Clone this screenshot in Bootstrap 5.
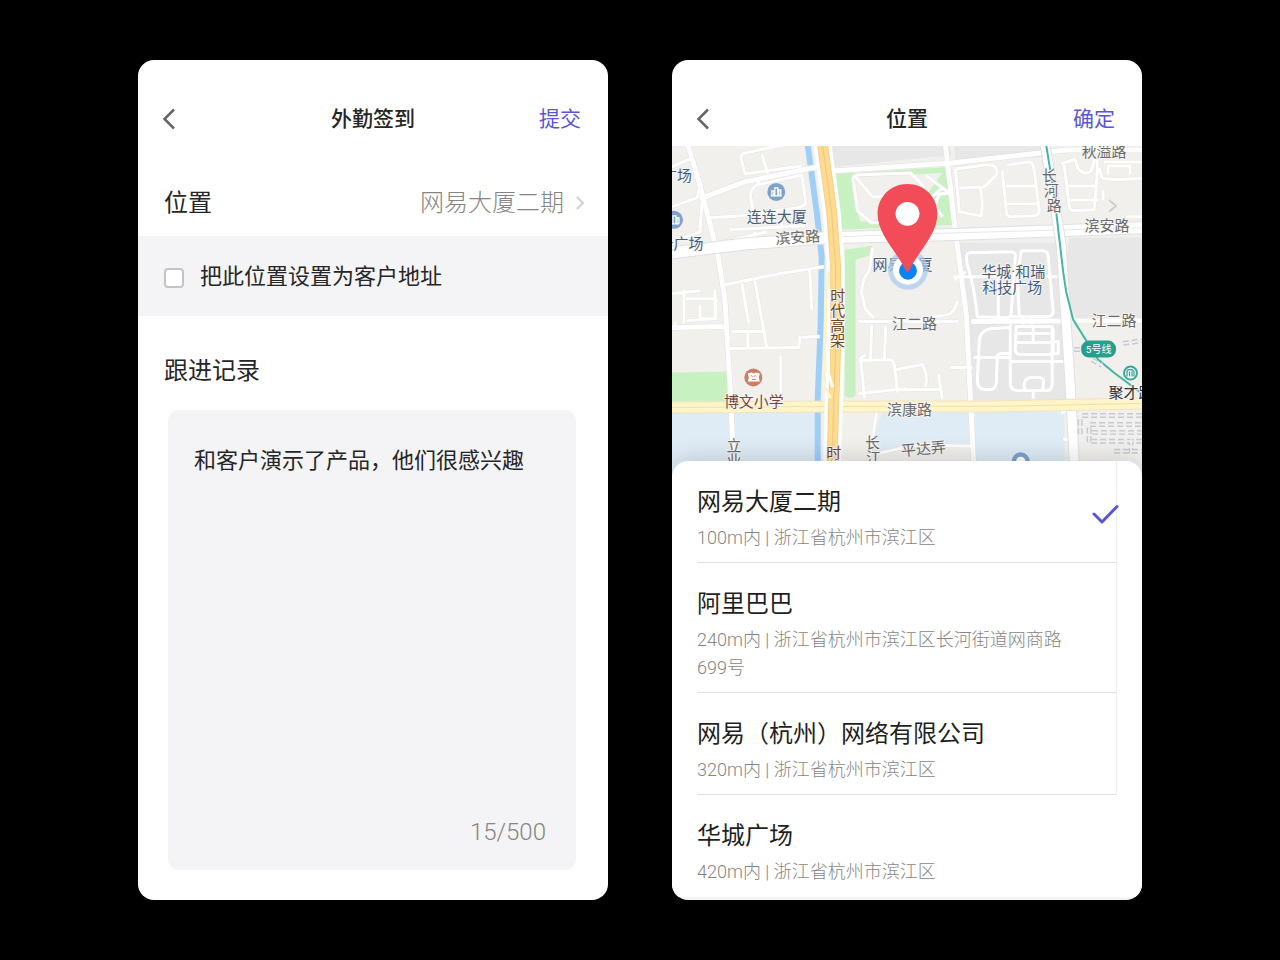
<!DOCTYPE html>
<html lang="zh-CN">
<head>
<meta charset="utf-8">
<meta name="viewport" content="width=device-width, initial-scale=1">
<title>外勤签到</title>
<link href="https://cdn.jsdelivr.net/npm/bootstrap@5.3.0/dist/css/bootstrap.min.css" rel="stylesheet">
<style>
  body { background: #000; color: #262626; font-family: Roboto, "Noto Sans CJK SC", sans-serif; }
  .stage { max-width: 1004px; padding: 60px 0; gap: 64px; }
  .screen { flex: 1 1 0; min-width: 320px; min-height: 840px; background: #fff; border-radius: 16px; overflow: hidden; }
  .topbar { height: 86px; padding: 32px 24px 0; display: grid; grid-template-columns: 1fr auto 1fr; align-items: center; }
  .topbar h1 { font-size: 21px; line-height: 30px; font-weight: 500; margin: 0; }
  .plain { background: none; border: 0; padding: 0; color: inherit; text-align: left; }
  .action { color: #5a55d6; font-size: 21px; line-height: 30px; margin-right: 3px; }
  .place { height: 90px; padding: 24px 20px 0 26px; font-size: 24px; line-height: 34px; }
  .quiet { color: #858585; font-weight: 300; }
  .band { background: #f4f4f7; height: 80px; padding: 0 26px; font-size: 22px; }
  .band .form-check-input { width: 20px; height: 20px; margin: 3px 0 0; border: 2px solid #c4c4c6; border-radius: 4px; background-color: #fff; }
  .note-title { height: 94px; padding: 16px 26px 0; font-size: 24px; }
  .note { background: #f4f4f7; border-radius: 10px; margin: 0 32px 30px 30px; padding: 33px 30px 20px 26px; }
  .note textarea { border: 0; background: none; padding: 0; resize: none; outline: 0; color: #262626; font-size: 22px; line-height: 36px; min-height: 300px; }
  .note output { font-size: 24px; line-height: 36px; }
  .map-view { display: block; width: 100%; height: auto; }
  .map-view text { font-family: Roboto, "Noto Sans CJK SC", sans-serif; font-size: 15px; text-anchor: middle; paint-order: stroke; stroke: #f6f5f3; stroke-width: 2px; stroke-linejoin: round; }
  .sheet { position: relative; margin-top: -16px; border-radius: 16px 16px 0 0; background: #fff; padding: 0 25px; box-shadow: 0 -4px 22px rgba(0,0,0,.14); }
  .spot { border-bottom: 1px solid #e0e0e0; border-right: 1px solid #ededed; }
  .spot:last-child { border-color: transparent; }
  .spot button { padding: 23px 0 10px; }
  .spot-name { font-size: 24px; line-height: 36px; color: #1f1f1f; }
  .spot-addr { font-size: 18px; line-height: 28px; margin-top: 4px; padding-right: 48px; }
  .tick { margin: 19px -3px 0 0; }
</style>
</head>
<body>
<main class="stage d-flex flex-wrap mx-auto">

  <section class="screen d-flex flex-column">
    <header class="topbar">
      <button type="button" class="plain d-flex" aria-label="返回">
        <svg width="14" height="22" viewBox="0 0 14 22" fill="none" stroke="#666" stroke-width="2.5"><path d="M12 1.5 2.5 11 12 20.5"/></svg>
      </button>
      <h1>外勤签到</h1>
      <button type="button" class="plain action ms-auto">提交</button>
    </header>
    <a href="#spots" class="place d-flex align-items-center justify-content-between text-reset text-decoration-none">
      <span>位置</span>
      <span class="quiet d-flex align-items-center">网易大厦二期
        <svg class="ms-2" width="16" height="16" viewBox="0 0 16 16" fill="none" stroke="#d0d0d0" stroke-width="2"><path d="m5 2 6 6-6 6"/></svg>
      </span>
    </a>
    <div class="band d-flex align-items-center">
      <input class="form-check-input" type="checkbox" id="asAddress">
      <label class="ps-3" for="asAddress">把此位置设置为客户地址</label>
    </div>
    <label class="note-title d-flex align-items-center" for="record">跟进记录</label>
    <div class="note flex-grow-1 d-flex flex-column">
      <textarea id="record" class="w-100 flex-grow-1" maxlength="500" spellcheck="false">和客户演示了产品，他们很感兴趣</textarea>
      <output class="quiet text-end" for="record">15/500</output>
    </div>
  </section>

  <section class="screen">
    <header class="topbar">
      <button type="button" class="plain d-flex" aria-label="返回">
        <svg width="14" height="22" viewBox="0 0 14 22" fill="none" stroke="#666" stroke-width="2.5"><path d="M12 1.5 2.5 11 12 20.5"/></svg>
      </button>
      <h1>位置</h1>
      <button type="button" class="plain action ms-auto">确定</button>
    </header>

    <svg class="map-view" viewBox="0 6 471 332" role="img" aria-label="地图">
      <rect y="6" width="471" height="332" fill="#f1f0ed"/>
      <!-- grey blocks -->
      <g fill="#e7e7e8">
        <path d="M160 5h118l2 10-118 12zM283 5h90l1 12-90 4zM288 103h98l10 158H300z"/>
        <path d="M398 98h73v82h-65l-14-29z"/>
      </g>
      <!-- water areas -->
      <path d="M0 273h146v65H0zM211 272h89v32l-105 12zM303 272h90l1 66h-91z" fill="#dfecf5"/>
      <!-- parks -->
      <g fill="#c8f1c1">
        <path d="M163 34l115-7 7 58-116 5zM173 110l28-4-4 10-13 4v136q-6 5-11 0zM0 233l55-1v30H0z"/>
      </g>
      <path d="M183 37l88-4-16 22 12 22-78 5-5-15z" fill="#f1f0ed"/>
      <path d="M136 5l9 67 5 45-1 68-3 75v78" fill="none" stroke="#9fcff7" stroke-width="6"/>

      <!-- streets: grey casing under white line -->
      <defs>
        <g id="lanes">
          <path d="M0 67l25-9 4-14-11-30M0 27l18-8M30 62l-2 30-25 9M69 17q0-3 4-4l38-8M69 17l4 17 57-8M90 14l6 20M85 45q-8 6-6 14l3 14M85 45l3-6M85 45l45-10 4 27q0 4-8 6l-44 5M38 78l95-6M58 90l75-4M110 82l-1 7M83 92v8M45 104l50-12"/>
          <path d="M53 145l60-12 39-6M70 144l7 40M83 141l12 67M138 130l2 40M0 154l28-3M12 184v-34M14 159h30v20H28v-14M15 181l28-2V150M3 188v-6M57 209l70-1 1-10 20-1M60 192h31M76 192v16M109 216v38"/>
          <path d="M184 35l55-2 14 14-10 8-42 2-17-20M184 35q-4 3-2 8l4 28 14 12 30-1M236 77l34-28M254 35l25 19M268 54l-5 12 8 11M268 54l11-1"/>
          <path d="M284 29l30-4q14-1 11 10l-12 12-25 1M284 29l4 43 22 4q2-16-1-28M336 25l22-3q4 0 5 8l5 40q0 6-5 6l-24 1q-4 0-4-6l-4-40M335 46h30M335 64h32"/>
          <path d="M393 25l5 40q0 6 4 6l21-1q4-40 3-50M397 46h28M399 60h28M390 24l14-5M404 19q2 13 10 14t9-14M428 28l3 10q10 3 40 0M433 22h38M437 34v-8h22v8M432 50v10M455 77h16"/>
          <path d="M201 108l-3 22q-8 11-8 24l4 16 8 8M187 182h100M194 215l-5 4 4 40M187 221l32-1q4 3 4 7l3 26M200 186l-1 33M214 186l-1 33M187 254l48-5M225 230l26-5q6 12 3 22M225 250l43 0M267 235l4 25M279 228h22M240 181l36-6q8-3 10-14"/>
          <path d="M297 113l42-1q6 0 5 6l-4 55q0 5-5 5l-29-1q-3-30-10-52-2-10 1-12M350 111h22q5 0 5 6l5 54q0 6-6 6h-38M350 111l-4 26 2 39M282 137h115M327 137v41M283 140l11-8M352 177v8M360 177v8"/>
          <path d="M340 188l-19 1q-12 1-13 12l-2 40q0 8 7 9 12 2 12-8l1-24q0-4 5-4h9M302 218h37M339 185v58q0 8 7 8h30q5 0 5-8v-57M345 187h33q4 0 4 4v20q0 4-4 4h-28q-6 0-6-5zM344 194h38M344 203h38M362 187v16M339 222h55M353 250v-6q1-6 8-6h7q6 0 4 7v6M382 202h5v12h-5M362 251v8"/>
          <path d="M205 273l-7 45M207 314l36-8 60 1M392 300h10M390 274l12-6"/>
        </g>
        <g id="streets">
          <path d="M16 5l12 40 18 70 7 45 6 100 3 78M28 59l45-17 72-15M160 31l120-8 115-13h76M274 5l9 78 12 93 8 162M0 188l55-1"/>
          <path d="M300 182l171-1"/>
        </g>
      </defs>
      <g fill="none" stroke-linejoin="round">
        <use href="#lanes" stroke="#e6e5e3" stroke-width="4"/>
        <use href="#streets" stroke="#e0e0df" stroke-width="6"/>
        <use href="#lanes" stroke="#fff" stroke-width="3"/>
        <use href="#streets" stroke="#fff" stroke-width="5"/>
        <path d="M0 113l75-9 80-6 120-3 196-7" stroke="#e0e0e0" stroke-width="13"/>
        <path d="M0 113l75-9 80-6 120-3 196-7" stroke="#fff" stroke-width="11"/>
        <path d="M165 97l120-4 186-5" stroke="#e7e7e7" stroke-width="1"/>
        <path d="M374 5l16 100 9 140 5 93" stroke="#e0e0e0" stroke-width="11"/>
        <path d="M374 5l16 100 9 140 5 93" stroke="#fff" stroke-width="9"/>
        <path d="M0 268l170-1 150 0 151-3" stroke="#efe3bd" stroke-width="12"/>
        <path d="M0 268l170-1 150 0 151-3" stroke="#fff5c9" stroke-width="10"/>
        <path d="M0 268l170-1 150 0 151-3" stroke="#f1dfa4" stroke-width="1"/>
        <path d="M151 5l9 67 4 55v80l-2 60-2 71" stroke="#fff" stroke-width="18"/>
        <path d="M151 5l9 67 4 55v80l-2 60-2 71" stroke="#f2d08c" stroke-width="11"/>
        <path d="M151 5l9 67 4 55v80l-2 60-2 71" stroke="#fddc91" stroke-width="9"/>
        <path d="M151 5l9 67 4 55v80l-2 60-2 71" stroke="#f4c576" stroke-width="1"/>
        <path d="M157 132l-3 30-1 85 6 12" stroke="#fff4c9" stroke-width="3"/>
        <path d="M156 205l1 30 4 13" stroke="#fff" stroke-width="3"/>
        <path d="M375 5l8 50 9 77 3 20 7 28 25 40 17 14 27 20" stroke="#43b7a5" stroke-width="2"/>
        <g stroke="#c6cad6" stroke-width="5" stroke-dasharray="6 3">
          <path d="M411 276h60M419 285h52M421 293h50M420 302h51M409 280v18M418 288v16M443 312h28M460 300v14M452 204l19-3M421 220l10 6M403 210h6"/>
        </g>
        <g stroke="#f1f0ed" stroke-width="2" stroke-dasharray="6 3">
          <path d="M411 276h60M419 285h52M421 293h50M420 302h51M409 280v18M418 288v16M443 312h28M460 300v14M452 204l19-3M421 220l10 6M403 210h6"/>
        </g>
        <path d="m438 60 7 6-7 6" stroke="#d0d0d0" stroke-width="2"/>
      </g>

      <!-- place markers -->
      <g fill="#7da3cb">
        <circle cx="104.5" cy="52" r="9"/><circle cx="2" cy="80" r="9"/><circle cx="349.5" cy="322" r="9"/>
      </g>
      <g fill="none" stroke="#fff" stroke-width="1.3">
        <path d="M99 56h11M100 56v-5h2v5M103 56v-8h3v8M107 56v-6h2v6M-2 84h9M1 84v-8h3v8M5 84v-6h2v6"/>
        <circle cx="349.5" cy="322" r="4" fill="#fff"/>
      </g>
      <circle cx="81.5" cy="238" r="9" fill="#cb7f63"/>
      <path d="M76 234l4-1 2 1 2-1 4 1-1 4 1 4H76l1-4z" fill="#fff"/>
      <path d="M79 236l2 1M84 236l-2 1M80 240h4" stroke="#cb7f63"/>
      <rect x="410" y="201" width="35" height="17" rx="8" fill="#26a08d"/>
      <circle cx="459.5" cy="233.5" r="6.5" fill="#fff" stroke="#3aa797" stroke-width="2"/>
      <path d="M456 237v-5q0-2 3-2t4 2v5M458.5 237v-5M461 237v-5" fill="none" stroke="#3aa797" stroke-width="1.3"/>

      <!-- labels -->
      <g fill="#47607f">
        <text x="5" y="41">广场</text><text x="105" y="82">连连大厦</text><text x="9" y="109">云广场</text>
        <text x="231" y="130">网易大厦</text><text x="342" y="137">华城·和瑞</text><text x="341" y="153">科技广场</text>
      </g>
      <g fill="#6b6b6b">
        <text x="126" y="103" transform="rotate(-4 126 98)">滨安路</text><text x="433" y="17">秋溢路</text>
        <text x="436" y="91">滨安路</text><text x="243" y="189">江二路</text><text x="443" y="186">江二路</text>
        <text x="238" y="276">滨康路</text><text x="252" y="315" transform="rotate(-5 251 310)">平达弄</text>
        <text x="378" y="41">长</text><text x="380" y="56">河</text><text x="383" y="71">路</text>
        <text x="62" y="312">立</text><text x="62" y="327">业</text><text x="201" y="309">长</text><text x="202" y="324">江</text>
      </g>
      <g fill="#6f461f">
        <text x="166" y="161">时</text><text x="166" y="176">代</text><text x="166" y="191">高</text><text x="166" y="206">架</text>
        <text x="162" y="319">时</text><text x="162" y="334">代</text>
      </g>
      <text x="82" y="268" fill="#7b4637">博文小学</text>
      <text x="460" y="259" fill="#333">聚才路</text>
      <text x="427.5" y="213" style="font-size:10px;stroke:none" fill="#fff">5号线</text>

      <!-- current position and pin -->
      <circle cx="236.5" cy="130" r="20" fill="#a9c9ec" fill-opacity=".7"/>
      <circle cx="236.5" cy="130" r="15" fill="#fff"/>
      <circle cx="236.5" cy="131" r="9" fill="#0b84f3"/>
      <path d="M236 44c-17 0-30 13-30 30 0 20 17 35 28 56q2 4 4 0c11-21 28-36 28-56 0-17-13-30-30-30z" fill="#f34c59"/>
      <circle cx="236" cy="74" r="12" fill="#fff"/>
    </svg>

    <ul class="sheet list-unstyled mb-0" id="spots">
      <li class="spot">
        <button type="button" class="plain w-100 d-flex justify-content-between align-items-start" aria-pressed="true">
          <span><span class="spot-name d-block">网易大厦二期</span><span class="spot-addr quiet d-block pe-0">100m内 | 浙江省杭州市滨江区</span></span>
          <svg class="tick flex-shrink-0" width="28" height="22" viewBox="0 0 28 22" fill="none" stroke="#5a55d6" stroke-width="3" stroke-linecap="round" stroke-linejoin="round"><path d="m3 11 8 8L26 3.5"/></svg>
        </button>
      </li>
      <li class="spot">
        <button type="button" class="plain w-100"><span class="spot-name d-block">阿里巴巴</span><span class="spot-addr quiet d-block">240m内 | 浙江省杭州市滨江区长河街道网商路699号</span></button>
      </li>
      <li class="spot">
        <button type="button" class="plain w-100"><span class="spot-name d-block">网易（杭州）网络有限公司</span><span class="spot-addr quiet d-block">320m内 | 浙江省杭州市滨江区</span></button>
      </li>
      <li class="spot">
        <button type="button" class="plain w-100"><span class="spot-name d-block">华城广场</span><span class="spot-addr quiet d-block">420m内 | 浙江省杭州市滨江区</span></button>
      </li>
    </ul>
  </section>
</main>
<script src="https://cdn.jsdelivr.net/npm/bootstrap@5.3.0/dist/js/bootstrap.bundle.min.js"></script>
</body>
</html>
